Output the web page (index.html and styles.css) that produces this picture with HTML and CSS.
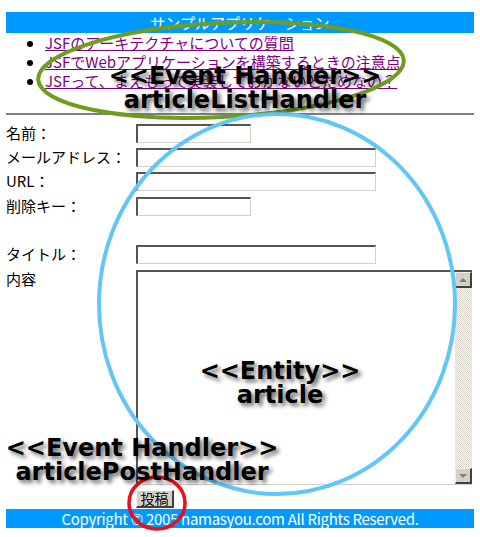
FILE: index.html
```html
<!DOCTYPE html>
<html lang="ja">
<head>
<meta charset="utf-8">
<title>サンプルアプリケーション</title>
<link rel="stylesheet" href="styles.css">
</head>
<body>
<div class="page">
  <div class="bar header">サンプルアプリケーション</div>
  <ul class="links">
    <li><a href="#">JSFのアーキテクチャについての質問</a></li>
    <li><a href="#">JSFでWebアプリケーションを構築するときの注意点</a></li>
    <li><a href="#">JSFって、まえもって実装しておかないとだめなの？</a></li>
  </ul>
  <hr class="rule">
  <form class="form">
    <div class="row"><span class="label">名前：</span><span class="input short"></span></div>
    <div class="row"><span class="label">メールアドレス：</span><span class="input long"></span></div>
    <div class="row r25"><span class="label">URL：</span><span class="input long"></span></div>
    <div class="row"><span class="label">削除キー：</span><span class="input short"></span></div>
    <div class="row spacer"></div>
    <div class="row r25"><span class="label">タイトル：</span><span class="input long"></span></div>
    <div class="row area-row"><span class="label">内容</span>
      <div class="textarea">
        <div class="ta-body"></div>
        <div class="scrollbar">
          <div class="sb-btn"><span class="tri up"></span></div>
          <div class="sb-track"></div>
          <div class="sb-btn"><span class="tri down"></span></div>
        </div>
      </div>
    </div>
    <div class="btn-row"><span class="button">投稿</span></div>
  </form>
  <div class="bar footer">Copyright © 2005 namasyou.com All Rights Reserved.</div>

  <svg class="marks" width="480" height="537" viewBox="0 0 480 537">
    <ellipse cx="221" cy="70" rx="183" ry="47" transform="rotate(-3 221 70)" fill="none" stroke="#6f9d1f" stroke-width="4"/>
    <ellipse cx="277" cy="304" rx="178" ry="190" fill="none" stroke="#63c6f7" stroke-width="4"/>
    <ellipse cx="157" cy="503" rx="28" ry="26" fill="none" stroke="#e8101a" stroke-width="3.5"/>
  </svg>
  <div class="note note-list">&lt;&lt;Event Handler&gt;&gt;<br>articleListHandler</div>
  <div class="note note-entity">&lt;&lt;Entity&gt;&gt;<br>article</div>
  <div class="note note-post">&lt;&lt;Event Handler&gt;&gt;<br>articlePostHandler</div>
</div>
</body>
</html>
```
FILE: styles.css
```css
html, body {
  margin: 0;
  padding: 0;
  background: #ffffff;
}
.page {
  position: relative;
  width: 468px;
  height: 537px;
  padding: 12px 6px 0;
  box-sizing: content-box;
  font-family: "Noto Sans CJK JP", "DejaVu Sans", sans-serif;
  font-size: 15px;
  line-height: 19px;
  color: #000;
}
.bar {
  background: #0099ff;
  color: #ffffff;
  text-align: center;
}
.header {
  height: 21px;
  line-height: 21px;
}
.links {
  margin: 0;
  padding: 0 0 0 39px;
  list-style: disc;
}
.links li {
  height: 19px;
}
.links a {
  color: #800080;
  text-decoration: underline;
}
.rule {
  margin: 23px 0 0;
  height: 0;
  border: 0;
  border-top: 2px solid #808080;
}
.form {
  margin: 9px 0 0;
  display: flex;
  flex-direction: column;
}
.row {
  display: flex;
  height: 24px;
}
.row.r25 { height: 25px; }
.label {
  width: 130px;
  flex: none;
  line-height: 17px;
  white-space: nowrap;
}
.input {
  display: block;
  height: 19px;
  box-sizing: border-box;
  border-style: solid;
  border-width: 2px 1px 1px 2px;
  border-color: #555555 #d4d0c8 #d4d0c8 #555555;
  background: #fff;
}
.input.short { width: 115px; }
.input.long { width: 240px; }
.area-row { height: 215px; }
.textarea {
  width: 336px;
  height: 215px;
  box-sizing: border-box;
  display: flex;
  border-style: solid;
  border-width: 2px 0 1px 2px;
  border-color: #555555 #d4d0c8 #d4d0c8 #555555;
}
.ta-body { flex: 1; background: #fff; }
.scrollbar {
  width: 17px;
  display: flex;
  flex-direction: column;
}
.sb-btn {
  height: 16px;
  box-sizing: border-box;
  background: #d4d0c8;
  border-style: solid;
  border-width: 1px 2px 2px 1px;
  border-color: #f0efe9 #404040 #404040 #f0efe9;
  display: flex;
  align-items: center;
  justify-content: center;
}
.sb-track {
  flex: 1;
  background-color: #ffffff;
  background-image: repeating-conic-gradient(#d4d0c8 0 25%, #ffffff 0 50%);
  background-size: 2px 2px;
}
.tri {
  width: 0;
  height: 0;
  border-left: 4px solid transparent;
  border-right: 4px solid transparent;
}
.tri.up { border-bottom: 4px solid #808080; }
.tri.down { border-top: 4px solid #808080; }
.btn-row {
  margin: 3px 0 0 130px;
  height: 18px;
}
.button {
  display: inline-block;
  width: 38px;
  height: 18px;
  box-sizing: border-box;
  background: #d4d0c8;
  border-style: solid;
  border-width: 1px 2px 2px 1px;
  border-color: #ffffff #404040 #404040 #ffffff;
  font-size: 14px;
  line-height: 15px;
  text-align: center;
}
.footer {
  margin-top: 3px;
  height: 19px;
  line-height: 19px;
  letter-spacing: -0.3px;
}
.marks {
  position: absolute;
  left: 0;
  top: 0;
  pointer-events: none;
}
.note {
  position: absolute;
  font-family: "DejaVu Sans", sans-serif;
  font-weight: bold;
  font-size: 24px;
  line-height: 24px;
  color: #000;
  text-align: center;
  white-space: nowrap;
  text-shadow: 3px 3px 4px rgba(0, 0, 0, 0.6);
}
.note-list { left: 95px; top: 64px; width: 300px; }
.note-entity { left: 130px; top: 359px; width: 300px; }
.note-post { left: -8px; top: 436px; width: 300px; }
```
